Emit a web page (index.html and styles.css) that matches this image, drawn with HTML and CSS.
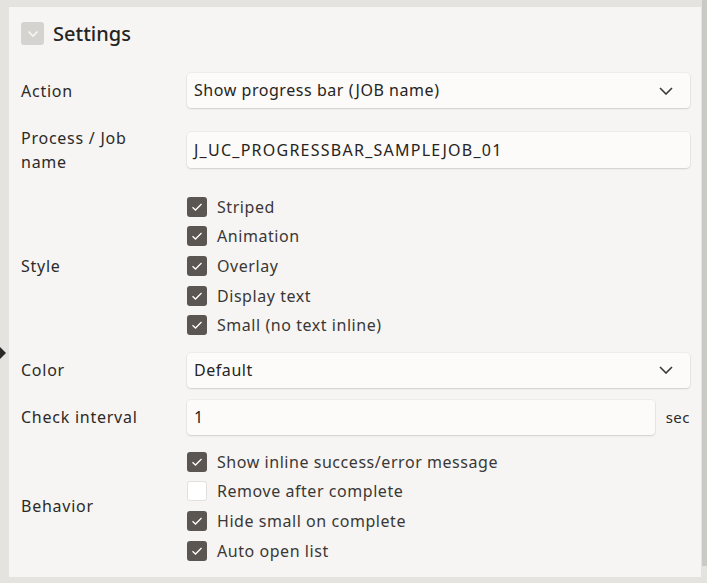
FILE: index.html
```html
<!DOCTYPE html>
<html lang="en">
<head>
<meta charset="utf-8">
<title>Settings</title>
<link rel="stylesheet" href="styles.css">
</head>
<body>
<div class="page">
  <span class="handle"></span>
  <span class="scrollbar"></span>
  <section class="panel">
    <header class="head">
      <span class="collapse">
        <svg width="12" height="8" viewBox="0 0 12 8"><path d="M1.5 1.5 L6 6 L10.5 1.5" fill="none" stroke="#f7f6f4" stroke-width="1.6"/></svg>
      </span>
      <h2 class="title">Settings</h2>
    </header>
    <div class="form">
      <div class="row">
        <div class="label">Action</div>
        <div class="field select">
          <span>Show progress bar (JOB name)</span>
          <svg class="chev" width="14" height="8" viewBox="0 0 14 8"><path d="M1 1 L7 7 L13 1" fill="none" stroke="#3a3835" stroke-width="1.6"/></svg>
        </div>
      </div>
      <div class="row row-wide">
        <div class="label">Process / Job<br>name</div>
        <div class="field input caps">J_UC_PROGRESSBAR_SAMPLEJOB_01</div>
      </div>
      <div class="row row-wide">
        <div class="label">Style</div>
        <div class="checks">
          <div class="check"><span class="box on"><svg width="12" height="10" viewBox="0 0 12 10"><path d="M1.5 5.2 L4.5 8 L10.5 2" fill="none" stroke="#fff" stroke-width="1.3"/></svg></span>Striped</div>
          <div class="check"><span class="box on"><svg width="12" height="10" viewBox="0 0 12 10"><path d="M1.5 5.2 L4.5 8 L10.5 2" fill="none" stroke="#fff" stroke-width="1.3"/></svg></span>Animation</div>
          <div class="check"><span class="box on"><svg width="12" height="10" viewBox="0 0 12 10"><path d="M1.5 5.2 L4.5 8 L10.5 2" fill="none" stroke="#fff" stroke-width="1.3"/></svg></span>Overlay</div>
          <div class="check"><span class="box on"><svg width="12" height="10" viewBox="0 0 12 10"><path d="M1.5 5.2 L4.5 8 L10.5 2" fill="none" stroke="#fff" stroke-width="1.3"/></svg></span>Display text</div>
          <div class="check"><span class="box on"><svg width="12" height="10" viewBox="0 0 12 10"><path d="M1.5 5.2 L4.5 8 L10.5 2" fill="none" stroke="#fff" stroke-width="1.3"/></svg></span>Small (no text inline)</div>
        </div>
      </div>
      <div class="row row-low">
        <div class="label">Color</div>
        <div class="field select">
          <span>Default</span>
          <svg class="chev" width="14" height="8" viewBox="0 0 14 8"><path d="M1 1 L7 7 L13 1" fill="none" stroke="#3a3835" stroke-width="1.6"/></svg>
        </div>
      </div>
      <div class="row">
        <div class="label">Check interval</div>
        <div class="unit-wrap">
          <div class="field input grow">1</div>
          <span class="unit">sec</span>
        </div>
      </div>
      <div class="row">
        <div class="label">Behavior</div>
        <div class="checks">
          <div class="check"><span class="box on"><svg width="12" height="10" viewBox="0 0 12 10"><path d="M1.5 5.2 L4.5 8 L10.5 2" fill="none" stroke="#fff" stroke-width="1.3"/></svg></span>Show inline success/error message</div>
          <div class="check"><span class="box off"></span>Remove after complete</div>
          <div class="check"><span class="box on"><svg width="12" height="10" viewBox="0 0 12 10"><path d="M1.5 5.2 L4.5 8 L10.5 2" fill="none" stroke="#fff" stroke-width="1.3"/></svg></span>Hide small on complete</div>
          <div class="check"><span class="box on"><svg width="12" height="10" viewBox="0 0 12 10"><path d="M1.5 5.2 L4.5 8 L10.5 2" fill="none" stroke="#fff" stroke-width="1.3"/></svg></span>Auto open list</div>
        </div>
      </div>
    </div>
  </section>
</div>
</body>
</html>
```

FILE: styles.css
```css
* { box-sizing: border-box; }
html, body {
  margin: 0;
  padding: 0;
  background: #e4e3e0;
  font-family: "Noto Sans", "Open Sans", sans-serif;
  color: #2c2a28;
}
.page {
  position: relative;
  width: 707px;
  height: 583px;
  padding: 7px 6px 0 9px;
}
.scrollbar {
  position: absolute;
  right: 0;
  top: 0;
  width: 5px;
  height: 566px;
  background: #cbc9c6;
}
.handle {
  position: absolute;
  left: 0;
  top: 347px;
  width: 0;
  height: 0;
  border-top: 6px solid transparent;
  border-bottom: 6px solid transparent;
  border-left: 6px solid #2a2826;
}
.panel {
  background: #f6f5f3;
  width: 692px;
  height: 570px;
  padding: 15px 11px 12px 12px;
}
.head {
  display: flex;
  align-items: center;
  gap: 9px;
  height: 23px;
  margin-bottom: 28px;
}
.collapse {
  width: 23px;
  height: 23px;
  border-radius: 3px;
  background: #d5d3d0;
  display: flex;
  align-items: center;
  justify-content: center;
}
.title {
  margin: 0;
  font-size: 20px;
  font-weight: 500;
  line-height: 23px;
  color: #262422;
}
.form {
  display: flex;
  flex-direction: column;
  gap: 12px;
}
.row {
  display: grid;
  grid-template-columns: 166px 1fr;
  align-items: center;
}
.row-wide { margin-top: 6px; }
.row-low { margin-top: 1px; }
.label {
  font-size: 16px;
  line-height: 24px;
  letter-spacing: 0.75px;
  color: #2c2a28;
}
.field {
  height: 35px;
  background: #fcfbfa;
  border-radius: 4px;
  box-shadow: 0 1px 2px rgba(0,0,0,0.13), 0 0 0 1px rgba(0,0,0,0.03);
  font-size: 16px;
  letter-spacing: 0.55px;
  line-height: 35px;
  padding: 0 7px;
  color: #262422;
}
.input { height: 36px; line-height: 36px; }
.caps { letter-spacing: 1.25px; }
.select {
  display: flex;
  align-items: center;
  justify-content: space-between;
}
.chev { margin-right: 10px; }
.unit-wrap {
  display: flex;
  align-items: center;
  gap: 11px;
}
.grow { flex: 1; height: 35px; line-height: 35px; }
.unit {
  font-size: 15px;
  letter-spacing: 0.5px;
  color: #2c2a28;
}
.checks {
  display: flex;
  flex-direction: column;
}
.check {
  height: 29.6px;
  display: flex;
  align-items: center;
  gap: 10px;
  font-size: 16px;
  letter-spacing: 0.55px;
  color: #3a3836;
}
.box {
  width: 20px;
  height: 20px;
  border-radius: 3px;
  display: flex;
  align-items: center;
  justify-content: center;
  flex: none;
}
.box.on { background: #5b5651; }
.box.off { background: #ffffff; border: 1px solid #e2e0dd; }
```
